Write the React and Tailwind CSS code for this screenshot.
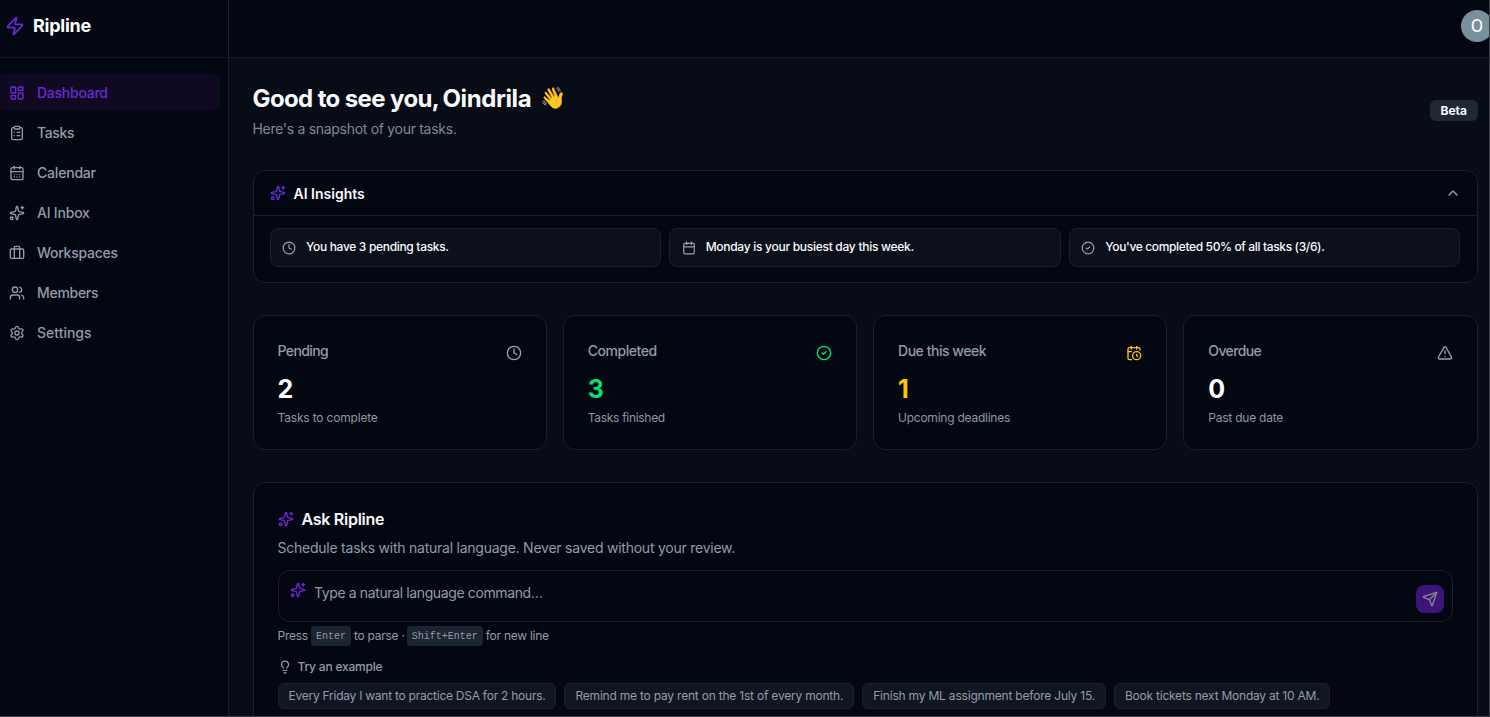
import React from 'react';
import {
  Zap,
  LayoutDashboard,
  ClipboardList,
  CalendarDays,
  Calendar,
  Sparkles,
  Users,
  Settings,
  Clock,
  CircleCheck,
  CalendarClock,
  TriangleAlert,
  ChevronUp,
  Send,
  Lightbulb,
} from 'lucide-react';

const navItems = [
  { label: 'Dashboard', icon: LayoutDashboard, active: true, tracking: 'tracking-[-0.25px]' },
  { label: 'Tasks', icon: ClipboardList, tracking: 'tracking-[-0.35px]' },
  { label: 'Calendar', icon: CalendarDays, tracking: 'tracking-[-0.2px]' },
  { label: 'AI Inbox', icon: Sparkles, tracking: 'tracking-[-0.2px]' },
  { label: 'Workspaces', icon: BriefcaseIcon, tracking: 'tracking-[-0.27px]' },
  { label: 'Members', icon: Users, tracking: 'tracking-[-0.3px]' },
  { label: 'Settings', icon: Settings, tracking: 'tracking-[0px]' },
];

const insights = [
  { text: 'You have 3 pending tasks.', icon: Clock, tracking: 'tracking-[-0.32px]' },
  { text: 'Monday is your busiest day this week.', icon: Calendar, tracking: 'tracking-[-0.28px]' },
  { text: "You've completed 50% of all tasks (3/6).", icon: CircleCheck, tracking: 'tracking-[-0.36px]' },
];

const stats = [
  {
    label: 'Pending',
    value: 2,
    note: 'Tasks to complete',
    icon: Clock,
    color: 'text-white',
    iconColor: 'text-[#99a1af]',
    labelTracking: 'tracking-[-0.6px]',
    noteTracking: 'tracking-[-0.18px]',
  },
  {
    label: 'Completed',
    value: 3,
    note: 'Tasks finished',
    icon: CircleCheck,
    color: 'text-[#05df72]',
    iconColor: 'text-[#05df72]',
    labelTracking: 'tracking-[-0.45px]',
    noteTracking: 'tracking-[-0.3px]',
  },
  {
    label: 'Due this week',
    value: 1,
    note: 'Upcoming deadlines',
    icon: CalendarClock,
    color: 'text-[#fdc700]',
    iconColor: 'text-[#fdc700]',
    labelTracking: 'tracking-[-0.46px]',
    noteTracking: 'tracking-[-0.24px]',
  },
  {
    label: 'Overdue',
    value: 0,
    note: 'Past due date',
    icon: TriangleAlert,
    color: 'text-white',
    iconColor: 'text-[#99a1af]',
    labelTracking: 'tracking-[-0.6px]',
    noteTracking: 'tracking-[-0.22px]',
  },
];

const examples = [
  { text: 'Every Friday I want to practice DSA for 2 hours.', tracking: 'tracking-[-0.25px]' },
  { text: 'Remind me to pay rent on the 1st of every month.', tracking: 'tracking-[-0.21px]' },
  { text: 'Finish my ML assignment before July 15.', tracking: 'tracking-[-0.2px]' },
  { text: 'Book tickets next Monday at 10 AM.', tracking: 'tracking-[-0.23px]' },
];

function BriefcaseIcon({ className }) {
  return (
    <svg
      className={className}
      viewBox="0 0 24 24"
      fill="none"
      stroke="currentColor"
      strokeWidth="2"
      strokeLinecap="round"
      strokeLinejoin="round"
    >
      <path d="M16 20V4a2 2 0 0 0-2-2h-4a2 2 0 0 0-2 2v16" />
      <rect width="20" height="14" x="2" y="6" rx="2" />
    </svg>
  );
}

function Sidebar() {
  return (
    <aside className="flex w-[229px] shrink-0 flex-col border-r border-[#1a212c] bg-[#030711]">
      <div className="flex h-[58px] shrink-0 items-center gap-2 border-b border-[#151b26] pb-[5px] pl-[5px]">
        <Zap className="size-5 text-[#6d28d9]" />
        <span className="text-lg font-bold tracking-[-0.25px] text-white">Ripline</span>
      </div>
      <nav className="-ml-[3px] mr-2 mt-4 flex flex-col gap-1">
        {navItems.map(({ label, icon: Icon, active, tracking }) => (
          <div
            key={label}
            className={`flex h-9 items-center gap-3 rounded-md px-3 text-sm font-medium ${tracking} ${
              active ? 'bg-[#0f0921] text-[#6d28d9]' : 'text-[#949ba8]'
            }`}
          >
            <Icon className="mt-px size-4" />
            <span className="pt-0.5">{label}</span>
          </div>
        ))}
      </nav>
    </aside>
  );
}

function Insights() {
  return (
    <section className="mt-[31px] h-[113px] rounded-xl border border-[#1a202b] bg-[#030711]">
      <div className="flex h-[45px] items-center justify-between border-b border-[#1a202b] px-4">
        <div className="flex items-center gap-2">
          <Sparkles className="size-4 text-[#6d28d9]" />
          <h2 className="pt-px text-sm font-semibold text-gray-50">AI Insights</h2>
        </div>
        <ChevronUp className="size-4 text-[#99a1af]" />
      </div>
      <div className="grid grid-cols-3 gap-2 px-4 pt-3">
        {insights.map(({ text, icon: Icon, tracking }) => (
          <div
            key={text}
            className="flex h-[39px] items-start gap-2.5 rounded-lg border border-[#1a212d] bg-[#0b101b] px-[11.5px] pt-[9px]"
          >
            <Icon className="mt-[3px] size-3.5 shrink-0 text-[#99a1af]" />
            <span className={`pt-px text-xs leading-4 font-medium text-gray-50 ${tracking}`}>{text}</span>
          </div>
        ))}
      </div>
    </section>
  );
}

function StatCard({ label, value, note, icon: Icon, color, iconColor, labelTracking, noteTracking }) {
  return (
    <div className="h-[135px] rounded-xl border border-[#1a202b] bg-[#030711] px-6 pt-6">
      <div className="flex items-start justify-between">
        <span className={`pt-px text-sm font-medium text-[#949ba8] ${labelTracking}`}>{label}</span>
        <Icon className={`mt-[5px] size-4 ${iconColor}`} />
      </div>
      <p className={`mt-3 text-[25px] leading-8 font-bold ${color}`}>{value}</p>
      <p className={`mt-[3px] text-xs leading-5 text-[#8f96a3] ${noteTracking}`}>{note}</p>
    </div>
  );
}

function Kbd({ children }) {
  return (
    <kbd className="flex h-5 items-end rounded bg-[#1b2431] px-[5px] pb-[3px] font-['Liberation_Mono',monospace] text-[10px] leading-3 text-[#949ba8]">
      {children}
    </kbd>
  );
}

function AskRipline() {
  return (
    <section className="mt-8 h-[280px] rounded-xl border border-[#1a202b] bg-[#030711] px-6 pt-6">
      <div className="flex h-6 items-center gap-2">
        <Sparkles className="size-4 text-[#6d28d9]" />
        <h2 className="text-base font-semibold tracking-[-0.27px] text-gray-50">Ask Ripline</h2>
      </div>
      <p className="mt-[7px] text-sm tracking-[-0.24px] text-[#949ba8]">
        Schedule tasks with natural language. Never saved without your review.
      </p>
      <div className="mt-3 flex h-[52px] items-start rounded-xl border border-[#1a202b] pl-[11.5px]">
        <Sparkles className="mt-[11px] size-4 text-[#6d28d9]" />
        <span className="mt-3 ml-2 flex-1 text-sm tracking-[-0.38px] text-[#949ba8]">
          Type a natural language command…
        </span>
        <button className="mt-3.5 mr-2 flex size-7 items-center justify-center rounded-lg bg-[#3b1678] text-[#85868b]">
          <Send className="size-4" />
        </button>
      </div>
      <div className="mt-1 flex h-5 items-center gap-[3px] text-xs tracking-[-0.25px] text-[#949ba8]">
        <span className="pb-px">Press</span>
        <div className="tracking-normal">
          <Kbd>Enter</Kbd>
        </div>
        <span className="pb-px">to parse ·</span>
        <div className="-ml-px tracking-normal">
          <Kbd>Shift+Enter</Kbd>
        </div>
        <span className="pb-px">for new line</span>
      </div>
      <div className="mt-[13px] flex h-4 items-center gap-1.5 text-xs font-medium tracking-[-0.2px] text-[#949ba8]">
        <Lightbulb className="size-3.5" />
        <span>Try an example</span>
      </div>
      <div className="mt-2 flex gap-2">
        {examples.map(({ text, tracking }) => (
          <span
            key={text}
            className={`flex h-[26px] items-center rounded-md border border-[#1a222e] bg-[#0f1621] px-2.5 text-xs whitespace-nowrap text-[#949ba8] ${tracking}`}
          >
            {text}
          </span>
        ))}
      </div>
    </section>
  );
}

export default function App() {
  return (
    <div className="flex h-[717px] w-[1490px] overflow-hidden border-r border-b border-[#3b3d47] bg-[#070c17] font-['Inter',sans-serif]">
      <Sidebar />
      <div className="flex min-w-0 flex-1 flex-col">
        <header className="flex h-[58px] shrink-0 items-start justify-end border-b border-[#151b26] bg-[#030711]">
          <div className="mt-2.5 -mr-[4px] flex size-8 shrink-0 items-center justify-center rounded-full bg-[#78909c] font-['Roboto',sans-serif] text-lg text-white">
            O
          </div>
        </header>
        <main className="min-h-0 flex-1 overflow-hidden pt-6 pr-[11.5px] pl-[23.5px]">
          <div className="flex items-center justify-between">
            <div>
              <h1 className="flex pt-px text-2xl leading-8 font-bold whitespace-pre text-gray-50">
                <span className="tracking-[-0.62px]">Good to see you, </span>
                <span className="-ml-px tracking-[-0.42px]">Oindrila </span>
                <span className="-mt-px ml-1 text-[21px]">👋</span>
              </h1>
              <p className="mt-1 text-sm tracking-[-0.3px] text-[#7f8896]">Here's a snapshot of your tasks.</p>
            </div>
            <span className="rounded-md bg-[#1f2836] px-[10.5px] py-[2.5px] text-xs font-bold text-gray-50">Beta</span>
          </div>
          <Insights />
          <div className="mt-8 grid grid-cols-4 gap-4">
            {stats.map((stat) => (
              <StatCard key={stat.label} {...stat} />
            ))}
          </div>
          <AskRipline />
        </main>
      </div>
    </div>
  );
}
